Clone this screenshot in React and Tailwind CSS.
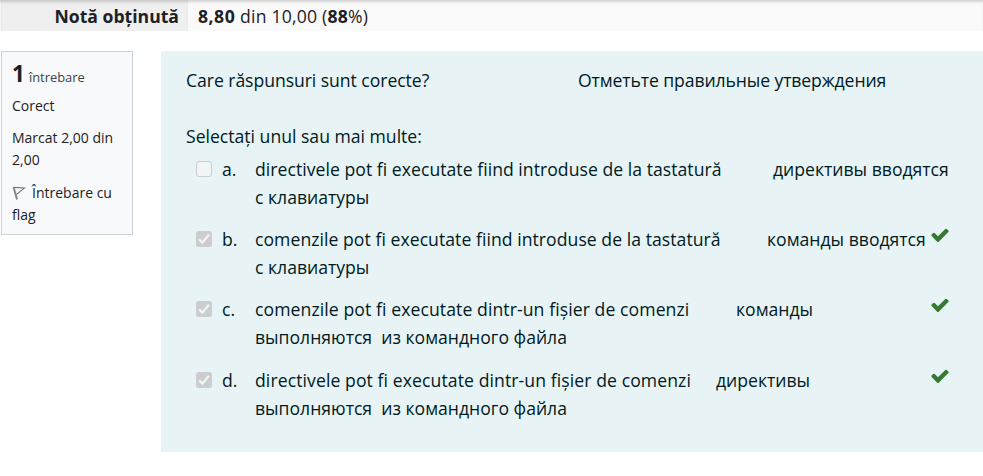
import React from "react";

const options = [
  { id: "a", ro: "directivele pot fi executate fiind introduse de la tastatură", ru: "директивы вводятся", rest: "с клавиатуры", col: "w-[518px] tracking-[0.04px]", checked: false, h: "h-[70px]" },
  { id: "b", ro: "comenzile pot fi executate fiind introduse de la tastatură", ru: "команды вводятся", rest: "с клавиатуры", col: "w-[512px] tracking-[0.05px]", checked: true, h: "h-[70px]" },
  { id: "c", ro: "comenzile pot fi executate dintr-un fișier de comenzi", ru: "команды", rest: "выполняются  из командного файла", col: "w-[481px] tracking-[0.09px]", checked: true, h: "h-[71px]" },
  { id: "d", ro: "directivele pot fi executate dintr-un fișier de comenzi", ru: "директивы", rest: "выполняются  из командного файла", col: "w-[461px] tracking-[0.09px]", checked: true, h: "h-[72px]" },
];

function Checkbox({ checked }) {
  return (
    <span
      className={
        checked
          ? "mt-[6px] size-4 shrink-0 rounded-[2.5px] bg-[#cbcdce]"
          : "mt-[6px] size-4 shrink-0 rounded-[3px] border border-[#cbcecf] bg-[#f2f5f6]"
      }
    >
      {checked && (
        <svg viewBox="0 0 16 16" className="size-4" fill="none" stroke="#f3f4f4" strokeWidth="2.2">
          <path d="M3.2 8.4 L6.4 11.6 L12.9 3.8" />
        </svg>
      )}
    </span>
  );
}

function CorrectMark() {
  return (
    <svg viewBox="0 0 1792 1792" className="ml-auto size-5 shrink-0" fill="#357a32">
      <path d="M1671 566q0 40-28 68l-724 724-136 136q-28 28-68 28t-68-28l-136-136-362-362q-28-28-28-68t28-68l136-136q28-28 68-28t68 28l294 295 656-657q28-28 68-28t68 28l136 136q28 28 28 68z" />
    </svg>
  );
}

function FlagIcon() {
  return (
    <svg viewBox="0 0 14 14" className="mr-[6px] inline-block size-[14px] align-[-2px]" fill="none" stroke="#777" strokeWidth="1.1">
      <path d="M1.6 1.2 L5 13.6" stroke="#858585" strokeWidth="1.9" />
      <path d="M1.5 1.4 L12.6 2 L4.2 8.6" />
    </svg>
  );
}

export default function App() {
  return (
    <div className="h-[476px] w-full overflow-hidden bg-white font-['Open_Sans','Noto_Sans',sans-serif] text-[17.6px] leading-7 text-[#1d2125]">
      <header className="flex h-[31px] bg-[#fafafa] shadow-[inset_0_3px_3px_-1px_rgba(0,0,0,0.16)]">
        <div className="ml-px w-[187px] bg-[#efefef] pt-[2px] pr-[9px] text-right font-bold whitespace-nowrap shadow-[inset_0_3px_3px_-1px_rgba(0,0,0,0.16)]">
          Notă obținută
        </div>
        <div className="pt-[2px] pl-[10px] tracking-[0.22px] whitespace-nowrap">
          <b className="tracking-[0.5px]">8,80</b> din 10,00 (<b>88</b>%)
        </div>
      </header>

      <div className="mt-5 flex items-start">
        <aside className="ml-px h-[184px] w-[132px] border border-[#cad0d7] bg-[#f8f9fa] pl-[10px] text-[14px] leading-[22px]">
          <h3 className="mt-[9px] flex h-7 items-baseline text-[12.9px] leading-[26px] text-[#3c4248]">
            <span className="mr-[4px] text-[22.5px] font-bold text-[#1d2125]">1</span>
            întrebare
          </h3>
          <p className="mt-[6px]">Corect</p>
          <p className="mt-[10px]">Marcat 2,00 din<br />2,00</p>
          <p className="mt-[11px] whitespace-nowrap"><FlagIcon />Întrebare cu<br />flag</p>
        </aside>

        <main className="ml-7 h-[401px] flex-1 bg-[#e7f3f5] pt-[15px] pl-[25px] text-[#001a1e]">
          <div className="flex whitespace-nowrap">
            <span className="w-[392px] tracking-[-0.05px]">Care răspunsuri sunt corecte?</span>
            <span className="tracking-[-0.1px]">Отметьте правильные утверждения</span>
          </div>
          <p className="mt-7">Selectați unul sau mai multe:</p>
          <div className="mt-[5px] pl-[10px]">
            {options.map((o) => (
              <div key={o.id} className={`flex w-[754px] items-start ${o.h}`}>
                <Checkbox checked={o.checked} />
                <span className="ml-[10px] w-[33px] shrink-0">{o.id}.</span>
                <div className="whitespace-pre">
                  <div className="flex">
                    <span className={o.col}>{o.ro}</span>
                    <span>{o.ru}</span>
                  </div>
                  <div>{o.rest}</div>
                </div>
                {o.checked && <CorrectMark />}
              </div>
            ))}
          </div>
        </main>
      </div>
    </div>
  );
}
